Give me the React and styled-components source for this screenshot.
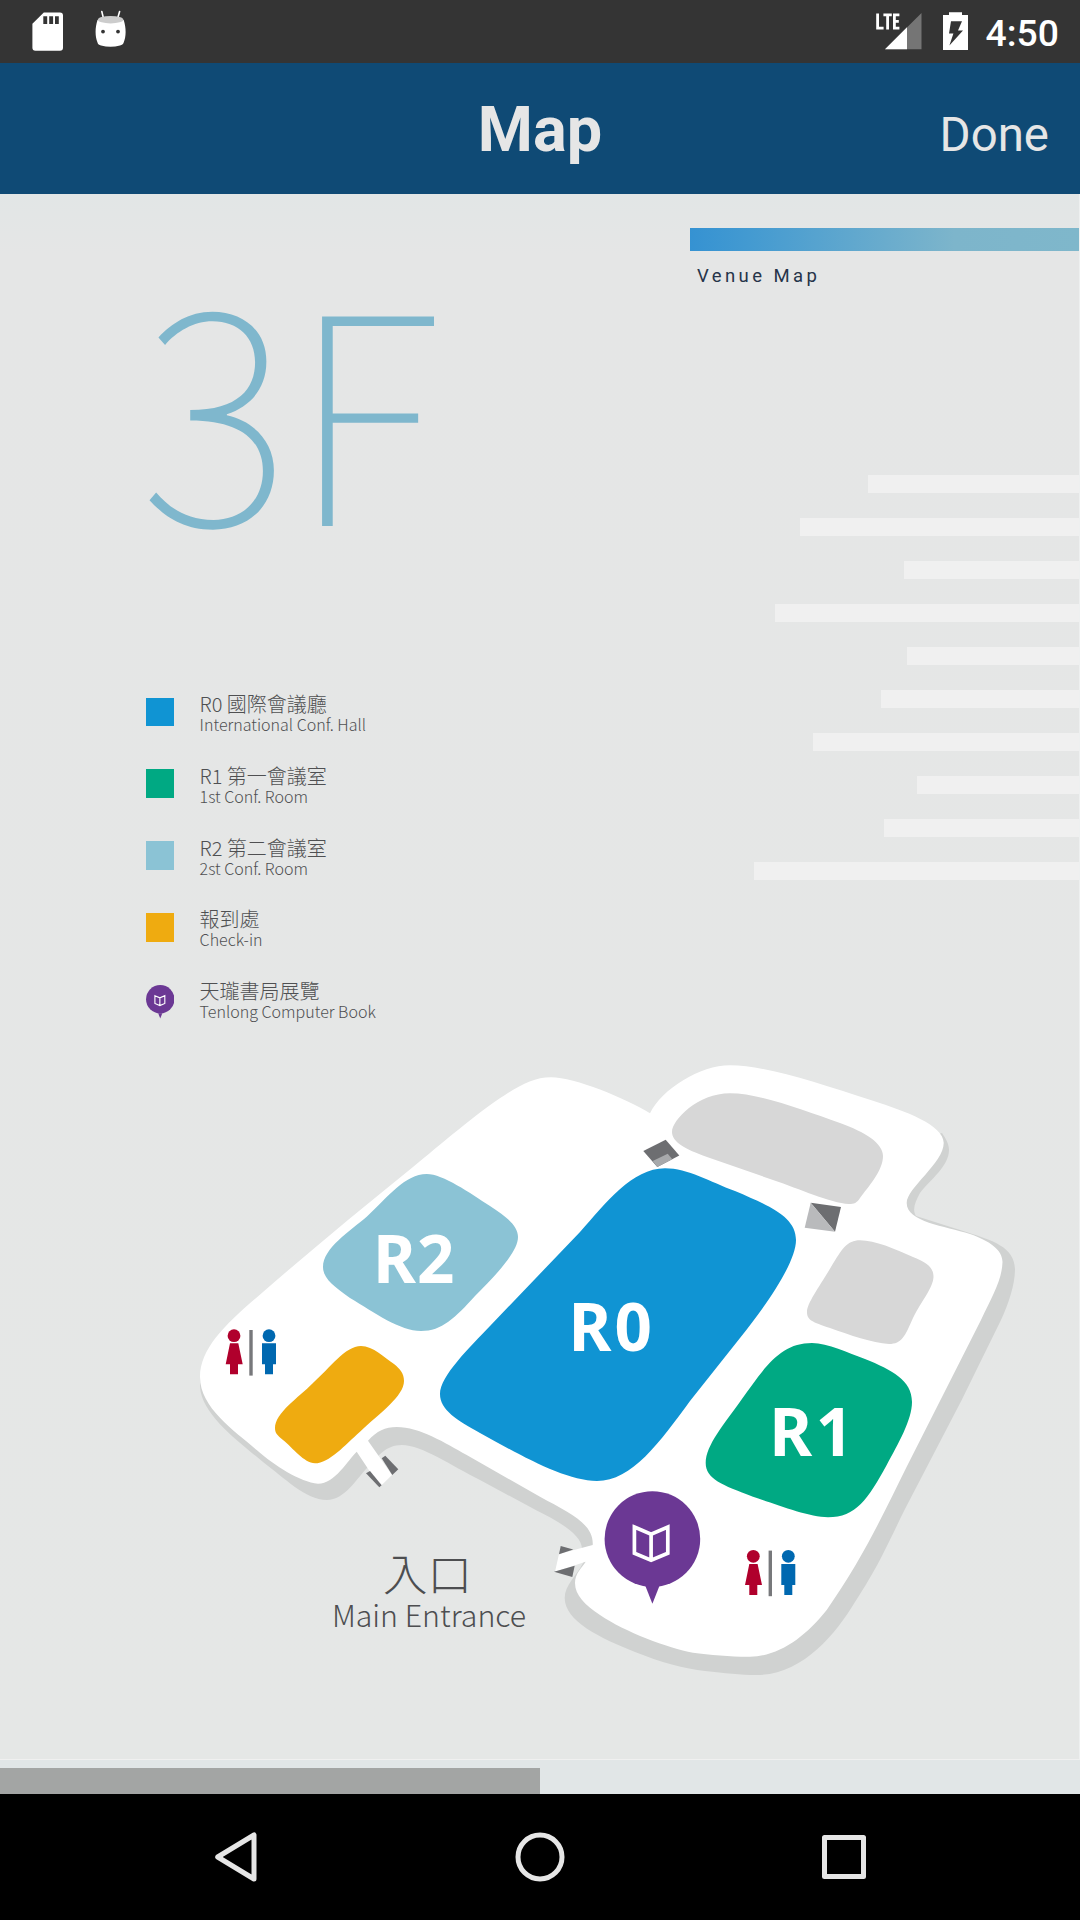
import React from "react";
import styled, { createGlobalStyle } from "styled-components";

const GlobalStyle = createGlobalStyle`
  * { box-sizing: border-box; }
  html, body { margin: 0; padding: 0; background: #000; }
  body { font-family: Roboto, "Noto Sans CJK TC", sans-serif; }
`;

const cjk = `"Noto Sans CJK TC", "Noto Sans", sans-serif`;

const Screen = styled.div`
  width: 1080px;
  height: 1920px;
  display: flex;
  flex-direction: column;
  overflow: hidden;
`;

const StatusBar = styled.div`
  height: 63px;
  flex: none;
  background: #343434;
  display: flex;
  align-items: flex-start;
  justify-content: space-between;
  padding: 0 21px 0 32px;
`;

const StatusGroup = styled.div`
  display: flex;
  align-items: flex-start;
`;

const StatusIcon = styled.svg`
  display: block;
  flex: none;
  height: 63px;
  width: ${(p) => p.$width}px;
  margin-right: ${(p) => p.$gap || 0}px;
`;

const Clock = styled.span`
  color: #fff;
  font-size: 37.3px;
  font-weight: 500;
  line-height: 67px;
`;

const Header = styled.header`
  height: 131px;
  flex: none;
  background: #0f4a75;
  color: #e6e6e6;
  display: grid;
  grid-template-columns: 1fr auto 1fr;
  align-items: baseline;
  padding: 29px 31px 0 31px;
`;

const Title = styled.h1`
  grid-column: 2;
  margin: 0;
  font-size: 63px;
  font-weight: 700;
  line-height: 76px;
`;

const DoneButton = styled.button`
  justify-self: end;
  border: 0;
  padding: 0;
  background: none;
  color: inherit;
  font: 400 47.4px Roboto, sans-serif;
`;

const Body = styled.main`
  height: 1600px;
  flex: none;
  background: #e1e6e7;
  display: flex;
  flex-direction: column;
`;

const Poster = styled.section`
  height: 1566px;
  flex: none;
  border-right: 1px solid #eef0f0;
  border-bottom: 1px solid #f0f0f0;
  background: linear-gradient(#e2e6e6, #e5e6e6 60px, #e5e7e6);
  display: flex;
  flex-direction: column;
`;

const PosterTop = styled.div`
  height: 856px;
  flex: none;
  display: flex;
  justify-content: space-between;
`;

const LeftColumn = styled.div`
  width: 480px;
  padding-left: 145px;
`;

const FloorName = styled.div`
  height: 497px;
  padding-top: 50px;
  margin-left: -5px;
  color: #7fb7cd;
  font-family: ${cjk};
  font-weight: 100;
  font-size: 288.5px;
  line-height: 312px;
  white-space: nowrap;
`;

const FloorDigit = styled.span`
  display: inline-block;
  transform: scaleY(1.035);
  transform-origin: 0 286px;
`;

const Legend = styled.ul`
  list-style: none;
  margin: 0;
  padding: 0;
  font-family: ${cjk};
  font-weight: 300;
  color: #4f5052;
`;

const LegendItem = styled.li`
  height: 71.8px;
  display: flex;
  gap: 25.5px;
  white-space: nowrap;
`;

const Marker = styled.div`
  width: 28.5px;
  flex: none;
  margin: 6.7px 0 0 0.6px;
`;

const Swatch = styled.div`
  height: 28.5px;
  background: ${(p) => p.$color};
`;

const RoomName = styled.div`
  padding-top: 1px;
  font-size: 20px;
  line-height: 24px;
`;

const RoomNote = styled.div`
  font-size: 16.05px;
  line-height: 17px;
`;

const RightColumn = styled.div`
  width: 389px;
  padding-top: 34px;
  display: flex;
  flex-direction: column;
  align-items: flex-end;
`;

const Banner = styled.div`
  width: 389px;
  height: 23px;
  flex: none;
  background: linear-gradient(90deg, #3592d2, #439ad1 15%, #7db5cb 68%, #7fb7cb);
`;

const Caption = styled.div`
  align-self: flex-start;
  height: 224px;
  padding: 13px 0 0 7px;
  color: #26344a;
  font-size: 18.5px;
  line-height: 24px;
  letter-spacing: 3.4px;
`;

const Stripes = styled.div`
  display: flex;
  flex-direction: column;
  align-items: flex-end;
  gap: 25.5px;
`;

const Stripe = styled.div`
  width: ${(p) => p.$width}px;
  height: 17.5px;
  background: #f0f0f0;
`;

const FloorPlan = styled.svg`
  display: block;
  width: 1079px;
  height: 709px;
`;

const RoomLabel = styled.text`
  font: 700 65.5px "Noto Sans", sans-serif;
  letter-spacing: ${(p) => p.$tracking}px;
  fill: #fff;
`;

const EntranceLabel = styled.text`
  font-family: ${cjk};
  font-weight: 300;
  font-size: ${(p) => p.$size}px;
  fill: #4d4e50;
  text-anchor: middle;
`;

const Drawer = styled.div`
  margin-top: auto;
  height: 26px;
  width: 540px;
  background: #a3a5a4;
`;

const NavBar = styled.nav`
  flex: 1;
  background: #000;
  display: flex;
  align-items: center;
  justify-content: space-between;
  padding: 0 209px;
`;

const NavIcon = styled.svg`
  width: 54px;
  height: 54px;
  fill: none;
  stroke: #e6e6e6;
  stroke-width: 5;
  stroke-linejoin: round;
`;

const rooms = [
  { name: "R0 國際會議廳", note: "International Conf. Hall", color: "#1094d3" },
  { name: "R1 第一會議室", note: "1st Conf. Room", color: "#00a983" },
  { name: "R2 第二會議室", note: "2st Conf. Room", color: "#8bc3d5" },
  { name: "報到處", note: "Check-in", color: "#efab10" },
  { name: "天瓏書局展覽", note: "Tenlong Computer Book" },
];

const stripes = [211, 279.3, 175, 304.3, 171.8, 198, 266, 162, 194.7, 325];

const BookPin = () => (
  <g>
    <path fill="#6b3894" d="M-7 47L0 64.7L7 47Z" />
    <circle r="47.8" fill="#6b3894" />
    <path
      d="M-18 -12L-1.3 -4.8L15.4 -12V14.2L-1.3 21.3L-18 14.2ZM-1.3 -4.8V21"
      fill="none"
      stroke="#fff"
      strokeWidth="3.7"
    />
  </g>
);

const Restroom = ({ x, y }) => (
  <g transform={`translate(${x} ${y})`}>
    <g fill="#b0002c">
      <circle cx="8.3" cy="5.9" r="6.4" />
      <path d="M4.3 13.5H12.6L17 34.5H12.3V44.5H4.3V34.5H0Z" />
    </g>
    <rect x="23.6" y="0.2" width="3.4" height="45.6" fill="#77787b" />
    <g fill="#0068b0">
      <circle cx="43.3" cy="5.9" r="6.4" />
      <path d="M36.3 13.5H50.3V34.5H47.3V44.5H39.3V34.5H36.3Z" />
    </g>
  </g>
);

const VenueDrawing = () => (
  <FloorPlan viewBox="0 1050 1079 709">
    <path
      fill="#d0d2d1"
      d="M200 1377V1387C202 1415 238 1441 263 1462C283 1477 306 1500 326.7 1500C345 1500 357 1478 367 1468C378 1456 386 1445 401.7 1445C422 1445 452 1466 480 1480L536.7 1510.5C560 1522 582 1535 582 1549L583 1563C577 1575 564.7 1585 564.7 1598C564.7 1621 600 1638 635 1652C660 1662 685 1669 705 1671C725 1673 740 1675 757 1675C802 1675 835 1635 855 1602C880 1564 890 1539 905 1509L961.7 1400L1001 1320C1009 1303 1015 1284 1015 1269C1014 1247 995 1241 960 1230L916 1216C912 1210 915 1202 920 1193C930 1180 949 1166 949 1150C949 1144 946 1139 942 1133L700 1200L400 1400Z"
    />
    <path
      fill="#fff"
      d="M200 1377C200 1347 228 1322 263 1292C310 1251 360 1210 413 1167C440 1145 478 1112 505 1095C522 1084 535 1077.3 551 1077.3C575 1077.5 625 1098 650 1113.3C662 1089 700 1065.3 730 1065.3C765 1065.3 815 1082 873 1100.7C905 1111 944 1125 943.7 1143C943.7 1163 906.7 1188 906.7 1203C906.7 1222 945 1226 970 1234C990 1241 1002.5 1250 1002.5 1262C1002 1280 992 1297 981 1320L906.7 1466.7C885 1510 865 1555 826.7 1610C805 1637 780 1656 750 1656.7C735 1657 710 1655 693 1652.7C668 1648 625 1632 600 1615C585 1605 575 1595 575 1583C575 1573 582 1568 585.7 1561.7L555 1571.7L559 1554L592.7 1545C594 1524 570 1513 540 1496.7L466.7 1455C445 1443 420 1427 396.7 1427C385 1427 377 1431 368 1440.7L392 1475L380 1486.7L356.7 1451.7C348 1460 335 1483.7 318 1483.7C300 1482 275 1466 256.7 1450C235 1431 200 1408 200 1377Z"
    />
    <path
      fill="#d7d7d7"
      d="M730 1093.3C760 1093.3 805 1111 840 1123C865 1132 883 1143 883 1156C883 1171 868 1187 860 1198C857 1203 854 1204 849 1204C830 1203 800 1189 773 1180L707 1157C685 1149 672 1142 672 1132C672 1120 698 1093.3 730 1093.3ZM860 1240.3C875 1240.3 895 1249 913 1257C928 1263 933.5 1268 933.5 1277C933 1288 922 1300 913 1318C905 1336 902 1344 889 1344C872 1343 850 1335 830 1328C812 1322 807 1320 807 1312C807 1303 820 1286 831 1267C842 1249 847 1240.3 860 1240.3Z"
    />
    <path
      fill="#8bc3d5"
      d="M426.7 1174C443 1174 470 1193 490 1206C507 1217 518 1226 518 1237C518 1252 496 1275 475 1296C455 1318 442 1331 421 1331C400 1331 375 1313 350 1298C333 1286 323 1278 323 1267C323 1248 350 1231 366.7 1216.7C388 1197 405 1174 426.7 1174Z"
    />
    <path
      fill="#efab10"
      d="M361 1346C373 1346 385 1358 394 1364C400 1369 404 1373 404 1381C404 1396 380 1413 360 1431.7C345 1445 329 1463.3 315 1463.3C304 1463 293 1448 283 1440C277 1435 275 1433 275 1428C275 1413 298 1398 313 1383C330 1368 345 1346 361 1346Z"
    />
    <path
      fill="#1094d3"
      d="M665 1168.3C688 1168.3 710 1182 735 1191C770 1206 796 1217 796 1240C796 1262 768 1303 740 1338L690 1401C660 1442 632 1481 597 1481C565 1481 520 1455 480 1433C457 1420 440 1410 440 1394C440 1376 470 1347 490 1326L580 1232C606 1203 632 1168.3 665 1168.3Z"
    />
    <path
      fill="#00a983"
      d="M812 1343C828 1343 848 1353 865 1359C892 1370 912 1380 912 1402C912 1420 898 1444 886.7 1465C868 1499 856 1517.3 828 1517.3C808 1517 775 1504 753 1496.7C722 1485 705.7 1479 705.7 1463C705.7 1445 725 1423 740 1401.7C765 1367 780 1343 812 1343Z"
    />

    <g fill="#6d6e71">
      <path d="M643.3 1151L665.7 1139.7L679.3 1155.5L657.3 1167Z" />
      <path d="M810.7 1202.7L841 1207L835 1231.7Z" />
      <path d="M381.7 1458.3L385.3 1455.7L398.3 1469.3L392.3 1475Z" />
      <path d="M366 1473.3L370 1471L381.7 1485.3L379.3 1487.3Z" />
      <path d="M560.7 1546L573.3 1549.5L559 1554.3Z" />
      <path d="M554 1571.7L574.7 1565.7L572.3 1577Z" />
    </g>
    <path fill="#a7a9ab" d="M652.7 1161L667.7 1153.7L672.3 1159.3L657.3 1167Z" />
    <path fill="#b9babc" d="M810.7 1202.7L835 1231.7L804.7 1227.7Z" />

    <Restroom x={225.7} y={1329.8} />
    <Restroom x={745} y={1550.4} />
    <g transform="translate(652.4 1539)">
      <BookPin />
    </g>

    <RoomLabel x="373" y="1282.6" $tracking={1}>R2</RoomLabel>
    <RoomLabel x="568.5" y="1350.6" $tracking={3}>R0</RoomLabel>
    <RoomLabel x="769.3" y="1455.6" $tracking={3.5}>R1</RoomLabel>
    <EntranceLabel x="427.5" y="1591" $size={44.5}>入口</EntranceLabel>
    <EntranceLabel x="429" y="1627.3" $size={30.3}>Main Entrance</EntranceLabel>
  </FloorPlan>
);

export default function App() {
  return (
    <Screen>
      <GlobalStyle />
      <StatusBar>
        <StatusGroup>
          <StatusIcon $width={31} $gap={32} viewBox="32 0 31 63">
            <path
              fill="#fff"
              fillRule="evenodd"
              d="M43.8 12.5H60Q63 12.5 63 15.5V47.7Q63 50.7 60 50.7H35.4Q32.4 50.7 32.4 47.7V23.8ZM43.3 16.3V24H47.2V16.3ZM49.2 16.3V24H53.1V16.3ZM55 16.3V24H58.8V16.3Z"
            />
          </StatusIcon>
          <StatusIcon $width={32} viewBox="95 0 32 63">
            <path
              d="M101.8 11.5L103.5 18.5M119.6 11.5L117.6 18.5"
              stroke="#fff"
              strokeWidth="1.6"
              strokeLinecap="round"
            />
            <path
              fill="#fff"
              d="M97.5 20C95 28 94.9 36 97.5 42.5C98 44.5 99 45 101 45.4Q110.5 48 120 45.4C122 45 123 44.5 123.7 42.5C126.3 36 126.2 28 123.7 20Z"
            />
            <ellipse cx="110.6" cy="19.7" rx="12.8" ry="3.7" fill="#ccc" />
            <circle cx="103" cy="31.6" r="1.9" fill="#343434" />
            <circle cx="118" cy="31.6" r="1.9" fill="#343434" />
          </StatusIcon>
        </StatusGroup>
        <StatusGroup>
          <StatusIcon $width={46} $gap={21} viewBox="876 0 46 63">
            <path fill="#757575" d="M921.5 13V49.3H885Z" />
            <path fill="#fff" d="M907 27.3V49.3H885Z" />
            <path
              d="M877.6 13.5V28.1H883.6M883.4 14.9H891.8M887.6 14.9V29.5M899.4 14.9H894.4V28.1H899.4M894.4 21.3H898.8"
              fill="none"
              stroke="#fff"
              strokeWidth="2.8"
            />
          </StatusIcon>
          <StatusIcon $width={25} $gap={18} viewBox="943 0 25 63">
            <path
              fill="#fff"
              fillRule="evenodd"
              d="M949 12.2H962V15H968V50H943V15H949ZM951 21.3L949 33.5H953.4L949.4 45.5L963 30.5H958L962 21.3Z"
            />
          </StatusIcon>
          <Clock>4:50</Clock>
        </StatusGroup>
      </StatusBar>

      <Header>
        <Title>Map</Title>
        <DoneButton>Done</DoneButton>
      </Header>

      <Body>
        <Poster>
          <PosterTop>
            <LeftColumn>
              <FloorName>
                <FloorDigit>3</FloorDigit>F
              </FloorName>
              <Legend>
                {rooms.map((room) => (
                  <LegendItem key={room.name}>
                    <Marker>
                      {room.color ? (
                        <Swatch $color={room.color} />
                      ) : (
                        <svg width="28.5" height="34" viewBox="-48 -48 96 114.5">
                          <BookPin />
                        </svg>
                      )}
                    </Marker>
                    <div>
                      <RoomName>{room.name}</RoomName>
                      <RoomNote>{room.note}</RoomNote>
                    </div>
                  </LegendItem>
                ))}
              </Legend>
            </LeftColumn>
            <RightColumn>
              <Banner />
              <Caption>Venue Map</Caption>
              <Stripes>
                {stripes.map((width) => (
                  <Stripe key={width} $width={width} />
                ))}
              </Stripes>
            </RightColumn>
          </PosterTop>
          <VenueDrawing />
        </Poster>
        <Drawer />
      </Body>

      <NavBar>
        <NavIcon viewBox="0 0 54 54">
          <path d="M45 5V49L8.7 27Z" />
        </NavIcon>
        <NavIcon viewBox="0 0 54 54">
          <circle cx="27" cy="27" r="22" />
        </NavIcon>
        <NavIcon viewBox="0 0 54 54">
          <rect x="7.5" y="7.5" width="39" height="39" />
        </NavIcon>
      </NavBar>
    </Screen>
  );
}
